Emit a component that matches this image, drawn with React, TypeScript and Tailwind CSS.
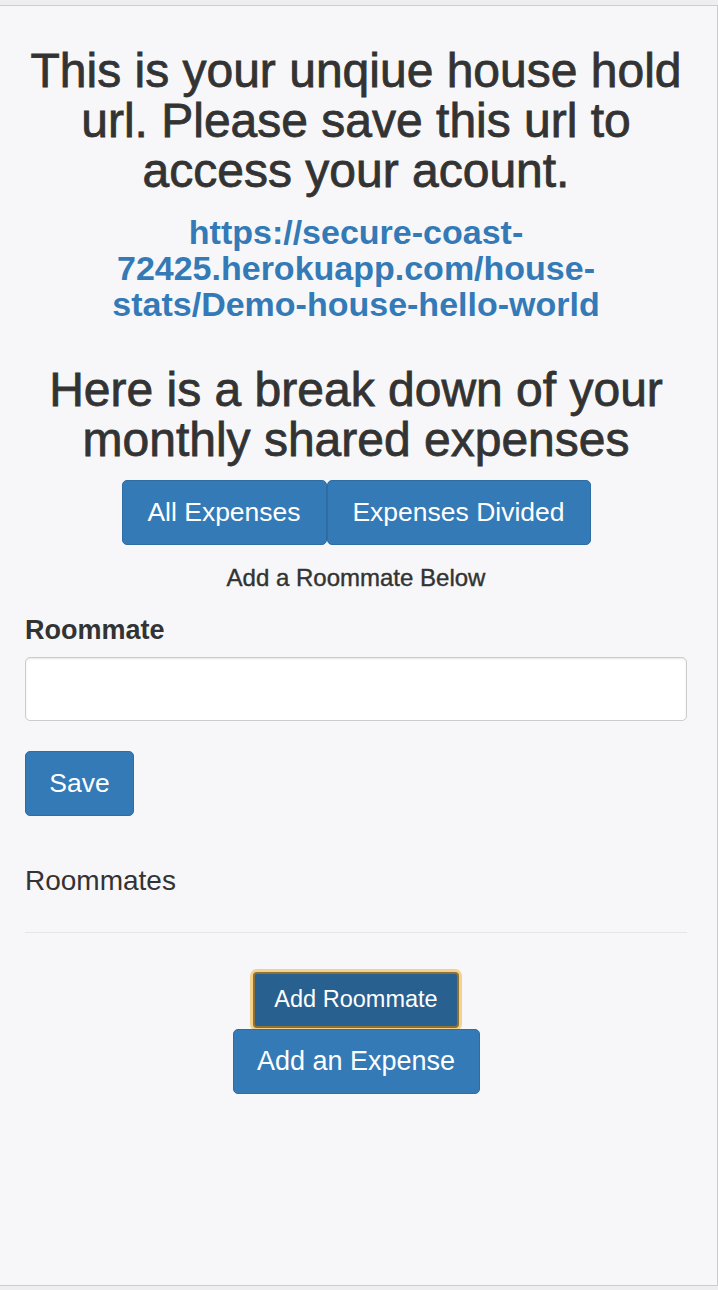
const font = "font-['Liberation_Sans',Arial,sans-serif]"

const App = () => {
  return (
    <div className={`min-h-screen bg-[#eeeef0] pt-[5px] ${font}`}>
      <div className="h-[1281px] border-t border-r border-b border-[#cdcdcf] bg-[#f7f7f9] pl-[25px] pr-[30px] pt-[40px] text-[#333]">
        <h1 className="text-center text-[48px] leading-[50px] [-webkit-text-stroke:0.8px_#333]">
          This is your unqiue house hold url. Please save this url to access your acount.
        </h1>
        <a href="#" className="mt-[18px] block text-center text-[34px] font-bold leading-[36px] text-[#337ab7]">
          https://secure-coast-
          <br />
          72425.herokuapp.com/house-
          <br />
          stats/Demo-house-hello-world
        </a>
        <h2 className="mt-[43px] text-center text-[48px] leading-[50px] [-webkit-text-stroke:0.8px_#333]">
          Here is a break down of your monthly shared expenses
        </h2>
        <div className="mt-[15px] flex justify-center">
          <button className="h-[65px] w-[205px] rounded-[5px] border border-[#2e6da4] bg-[#337ab7] text-[26.5px] text-white">
            All Expenses
          </button>
          <button className="h-[65px] w-[264px] rounded-[5px] border border-[#2e6da4] bg-[#337ab7] text-[26.5px] text-white">
            Expenses Divided
          </button>
        </div>
        <p className="mt-[20px] text-center text-[24px] leading-[26px] [-webkit-text-stroke:0.4px_#333]">
          Add a Roommate Below
        </p>
        <form className="mt-[24px]">
          <label className="block text-[27px] font-bold leading-[30px]">Roommate</label>
          <input className="mt-[12px] block h-[64px] w-full rounded-[5px] border border-[#ccc] bg-white px-3 text-[24px] shadow-[inset_0_1px_2px_rgba(0,0,0,0.1)]" />
          <button type="button" className="mt-[30px] h-[65px] w-[109px] rounded-[5px] border border-[#2e6da4] bg-[#337ab7] text-[26.5px] text-white">
            Save
          </button>
        </form>
        <h3 className="mt-[49px] text-[28px] leading-[32px]">Roommates</h3>
        <hr className="mt-[35px] border-t border-[#e6e6e8]" />
        <div className="mt-[39px] flex flex-col items-center">
          <button className="h-[56px] w-[206px] rounded-[4px] border-2 border-[#8f7233] bg-[#286090] text-[23.5px] text-white shadow-[0_0_0_3px_rgba(240,185,70,0.6)]">
            Add Roommate
          </button>
          <button className="mt-[1px] h-[65px] w-[247px] rounded-[5px] border border-[#2e6da4] bg-[#337ab7] text-[27px] text-white">
            Add an Expense
          </button>
        </div>
      </div>
    </div>
  )
}

export default App
